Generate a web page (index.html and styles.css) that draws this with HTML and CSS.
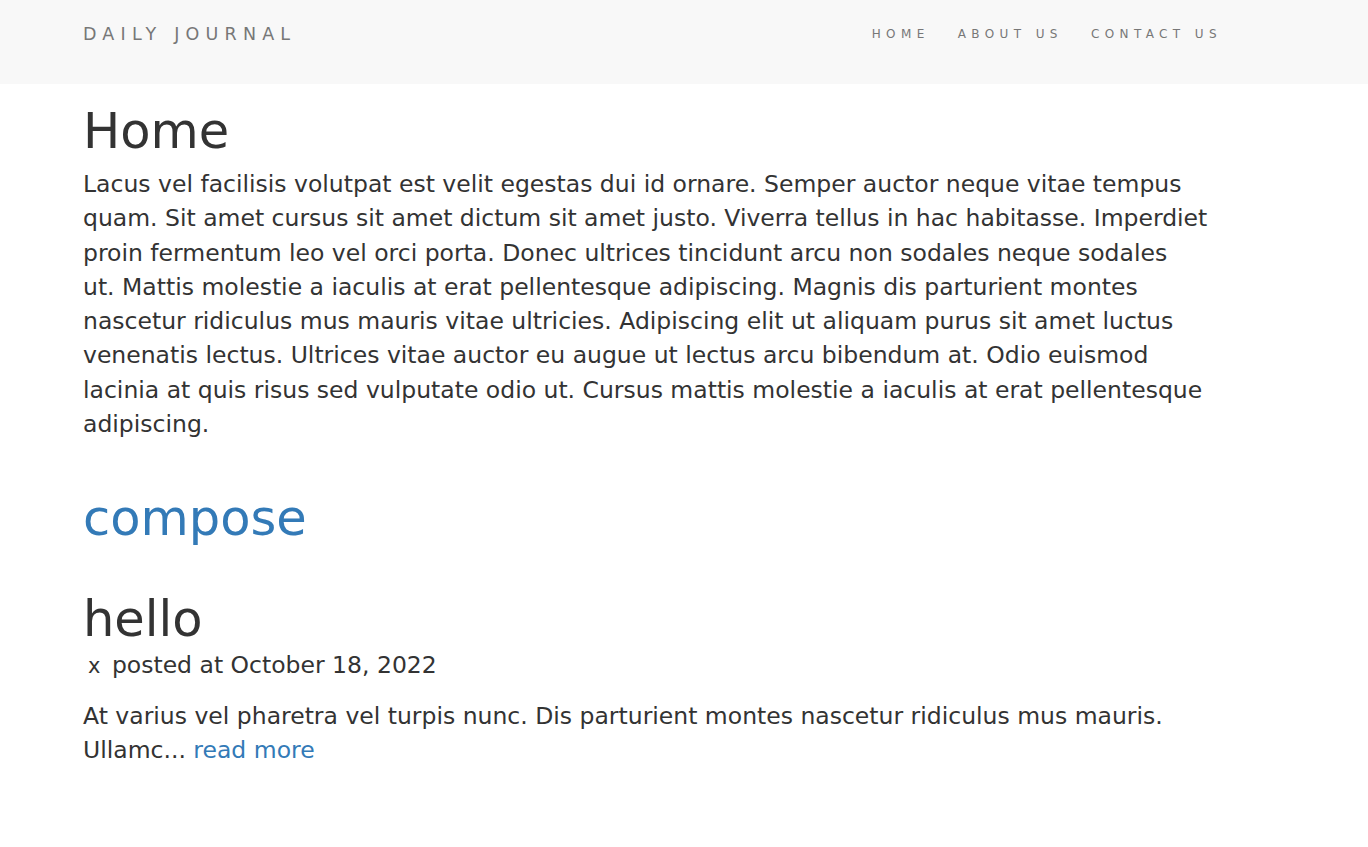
FILE: index.html
```html
<!DOCTYPE html>
<html lang="en">
<head>
<meta charset="utf-8">
<title>Daily Journal</title>
<link rel="stylesheet" href="styles.css">
</head>
<body>
<header class="navbar">
  <div class="wrap navbar-inner">
    <a class="brand" href="#">DAILY JOURNAL</a>
    <nav class="nav">
      <a href="#">HOME</a>
      <a href="#">ABOUT US</a>
      <a href="#">CONTACT US</a>
    </nav>
  </div>
</header>
<main class="wrap content">
  <h1 class="title">Home</h1>
  <p class="text intro">Lacus vel facilisis volutpat est velit egestas dui id ornare. Semper auctor neque vitae tempus<br>quam. Sit amet cursus sit amet dictum sit amet justo. Viverra tellus in hac habitasse. Imperdiet<br>proin fermentum leo vel orci porta. Donec ultrices tincidunt arcu non sodales neque sodales<br>ut. Mattis molestie a iaculis at erat pellentesque adipiscing. Magnis dis parturient montes<br>nascetur ridiculus mus mauris vitae ultricies. Adipiscing elit ut aliquam purus sit amet luctus<br>venenatis lectus. Ultrices vitae auctor eu augue ut lectus arcu bibendum at. Odio euismod<br>lacinia at quis risus sed vulputate odio ut. Cursus mattis molestie a iaculis at erat pellentesque<br>adipiscing.</p>
  <a class="title compose" href="#">compose</a>
  <article class="post">
    <h1 class="title post-title">hello</h1>
    <div class="meta"><button class="del" type="button">x</button> posted at October 18, 2022</div>
    <p class="text">At varius vel pharetra vel turpis nunc. Dis parturient montes nascetur ridiculus mus mauris.<br>Ullamc... <a class="more" href="#">read more</a></p>
  </article>
</main>
</body>
</html>
```
FILE: styles.css
```css
html, body {
  margin: 0;
  padding: 0;
  background: #fff;
}
body {
  font-family: "DejaVu Sans", sans-serif;
  color: #333;
}
a { text-decoration: none; }

.wrap {
  max-width: 1160px;
  padding-left: 83px;
}

.navbar {
  background: #f8f8f8;
  height: 84px;
}
.navbar-inner {
  display: flex;
  align-items: center;
  justify-content: space-between;
  height: 84px;
  padding-bottom: 16px;
  box-sizing: border-box;
  max-width: 1223px;
}
.brand {
  font-size: 17.5px;
  letter-spacing: 6.2px;
  color: #777;
  line-height: 20px;
}
.nav {
  display: flex;
  gap: 28px;
  margin-right: 1px;
}
.nav a {
  font-size: 12px;
  letter-spacing: 5.4px;
  color: #777;
  line-height: 16px;
}

.content {
  padding-top: 20px;
}
.title {
  display: block;
  font-size: 49.5px;
  font-weight: normal;
  line-height: 54px;
  margin: 0;
  color: #333;
}
.text {
  font-size: 23.5px;
  line-height: 34.3px;
  margin: 0;
}
.intro {
  margin-top: 9px;
}
.compose {
  color: #337ab7;
  margin-top: 50px;
  width: max-content;
}
.post {
  margin-top: 47px;
}
.meta {
  font-size: 23.5px;
  line-height: 34.3px;
  margin-top: 2px;
}
.del {
  font-family: "DejaVu Sans", sans-serif;
  font-size: 21px;
  color: #333;
  background: none;
  border: none;
  padding: 0 4px 0 5px;
  margin: 0;
  line-height: 20px;
  vertical-align: baseline;
}
.post .text {
  margin-top: 16px;
}
.more {
  color: #337ab7;
}
```
